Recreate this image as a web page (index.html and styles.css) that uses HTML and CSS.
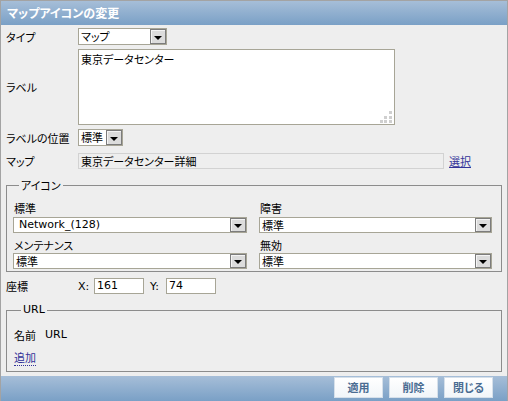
FILE: index.html
```html
<!DOCTYPE html>
<html lang="ja">
<head>
<meta charset="utf-8">
<link rel="stylesheet" href="styles.css">
</head>
<body>
<div class="dialog">
  <div class="header">マップアイコンの変更</div>
  <div class="content">
    <div class="row r-type">
      <div class="lbl">タイプ</div>
      <div class="sel w-type"><span class="val">マップ</span><span class="arr"></span></div>
    </div>
    <div class="row r-label">
      <div class="lbl">ラベル</div>
      <div class="textarea">東京データセンター<span class="grip"><i></i><i></i><i></i><i></i><i></i><i></i></span></div>
    </div>
    <div class="row r-pos">
      <div class="lbl">ラベルの位置</div>
      <div class="sel w-pos"><span class="val">標準</span><span class="arr"></span></div>
    </div>
    <div class="row r-map">
      <div class="lbl">マップ</div>
      <div class="ro">東京データセンター詳細</div>
      <a class="link" href="#">選択</a>
    </div>
    <fieldset class="fs fs-icon">
      <legend>アイコン</legend>
      <div class="grid">
        <div class="cell">
          <div class="flbl">標準</div>
          <div class="sel wide"><span class="val lat net">Network_(128)</span><span class="arr"></span></div>
        </div>
        <div class="cell">
          <div class="flbl">障害</div>
          <div class="sel wide"><span class="val">標準</span><span class="arr"></span></div>
        </div>
        <div class="cell">
          <div class="flbl">メンテナンス</div>
          <div class="sel wide"><span class="val">標準</span><span class="arr"></span></div>
        </div>
        <div class="cell">
          <div class="flbl">無効</div>
          <div class="sel wide"><span class="val">標準</span><span class="arr"></span></div>
        </div>
      </div>
    </fieldset>
    <div class="row r-coord">
      <div class="lbl">座標</div>
      <span class="xy lat">X:</span>
      <div class="inp lat">161</div>
      <span class="xy lat y">Y:</span>
      <div class="inp lat">74</div>
    </div>
    <fieldset class="fs fs-url">
      <legend class="lat">URL</legend>
      <div class="cols"><span>名前</span><span class="lat">URL</span></div>
      <a class="add" href="#">追加</a>
    </fieldset>
  </div>
  <div class="footer">
    <button class="btn">適用</button>
    <button class="btn">削除</button>
    <button class="btn">閉じる</button>
  </div>
</div>
</body>
</html>
```
FILE: styles.css
```css
* { box-sizing: border-box; }
html, body { margin: 0; padding: 0; }
body {
  width: 508px;
  height: 401px;
  font-family: "Noto Sans CJK JP", "DejaVu Sans", sans-serif;
  font-size: 11px;
  font-feature-settings: "palt";
  color: #000;
  background: #fff;
}
.lat { font-family: "DejaVu Sans", "Noto Sans CJK JP", sans-serif; font-size: 11px; font-feature-settings: normal; }
.dialog {
  width: 508px;
  height: 401px;
  display: flex;
  flex-direction: column;
  border: 1px solid #a3a3a3;
  border-bottom: 0;
  background: #eeeeee;
}
.header {
  height: 24px;
  flex: none;
  background: linear-gradient(#a6bed8, #7aa0c6);
  color: #fff;
  font-weight: bold;
  font-size: 12px;
  line-height: 24px;
  padding-left: 6px;
}
.content {
  flex: 1;
  padding: 0 5px;
}
.row { display: flex; align-items: center; }
.lbl { width: 72px; flex: none; line-height: 16px; }
.r-type { margin-top: 3px; height: 17px; }
.r-label { margin-top: 4px; height: 76px; }
.r-pos { margin-top: 4px; height: 17px; }
.r-map { margin-top: 7px; height: 16px; }
.r-coord { margin-top: 6px; height: 16px; }

.sel {
  display: flex;
  height: 17px;
  border: 1px solid #a7a596;
  background: #fff;
}
.sel .val { flex: 1; line-height: 15px; padding-left: 2px; white-space: nowrap; }
.sel .val.net { padding-left: 5px; }
.sel .arr {
  width: 16px;
  flex: none;
  background: #dcdcdc;
  border: 1px solid #7c7c7c;
  box-shadow: inset 1px 1px #f4f4f4;
  display: flex;
  align-items: center;
  justify-content: center;
  padding-top: 2px;
}
.sel .arr::after {
  content: "";
  border-left: 4px solid transparent;
  border-right: 4px solid transparent;
  border-top: 4px solid #000;
}
.w-type { width: 89px; }
.w-pos { width: 45px; }
.wide { width: 234px; height: 16px; }
.wide .val { line-height: 14px; }

.textarea {
  position: relative;
  width: 317px;
  height: 76px;
  border: 1px solid #a7a596;
  background: #fff;
  padding: 1px 2px;
  line-height: 16px;
  align-self: flex-start;
}
.grip {
  position: absolute;
  right: 1px;
  bottom: 1px;
  width: 12px;
  height: 12px;
}
.grip i { position: absolute; width: 3px; height: 3px; background: #cfcfcf; }
.grip i:nth-child(1) { right: 1px; bottom: 9px; }
.grip i:nth-child(2) { right: 1px; bottom: 4px; }
.grip i:nth-child(3) { right: 6px; bottom: 4px; }
.grip i:nth-child(4) { right: 1px; bottom: 0; }
.grip i:nth-child(5) { right: 6px; bottom: 0; }
.grip i:nth-child(6) { right: 10px; bottom: 0; }

.ro {
  width: 366px;
  height: 16px;
  border: 1px solid #d2d2d2;
  background: #eeeeee;
  padding-left: 2px;
  line-height: 14px;
}
.link { margin-left: 5px; color: #333399; text-decoration: underline; line-height: 16px; }

.fs {
  margin: 9px 0 0 0;
  border: 1px solid #8c8c8c;
  padding: 0 9px 2px 6px;
  min-width: 0;
}
.fs legend {
  padding: 0 2px;
  margin-left: 6px;
  line-height: 14px;
  height: 14px;
}
.fs-icon { padding-top: 8px; }
.grid {
  display: grid;
  grid-template-columns: 234px 233px;
  column-gap: 12px;
  row-gap: 4px;
}
.grid .wide { width: auto; }
.flbl { line-height: 16px; padding-left: 1px; margin-bottom: 1px; }
.grid .cell:nth-child(n+3) .flbl { margin-bottom: 0; }

.xy { width: 16px; flex: none; color: #000; }
.xy.y { margin-left: 6px; }
.inp {
  width: 50px;
  height: 16px;
  border: 1px solid #a7a596;
  background: #fff;
  padding-left: 2px;
  line-height: 14px;
}

.fs-url { padding: 10px 9px 5px 7px; }
.fs-url legend { margin-left: 7px; }
.cols { display: flex; line-height: 16px; }
.cols span:first-child { width: 31px; }
.add {
  display: inline-block;
  margin-top: 7px;
  color: #333399;
  text-decoration: none;
  border-bottom: 1px dotted #333399;
  line-height: 15px;
}

.footer {
  height: 25px;
  flex: none;
  background: linear-gradient(#a6bed8, #7aa0c6);
  display: flex;
  justify-content: flex-end;
  align-items: flex-start;
  gap: 6px;
  padding: 1px 14px 0 0;
}
.btn {
  width: 49px;
  height: 21px;
  border: 1px solid #d6e0ea;
  background: linear-gradient(#ffffff, #f1f5f9);
  color: #4a6c92;
  font-family: "Noto Sans CJK JP", sans-serif;
  font-feature-settings: "palt";
  font-weight: bold;
  font-size: 11px;
  padding: 0;
  line-height: 19px;
}
```
